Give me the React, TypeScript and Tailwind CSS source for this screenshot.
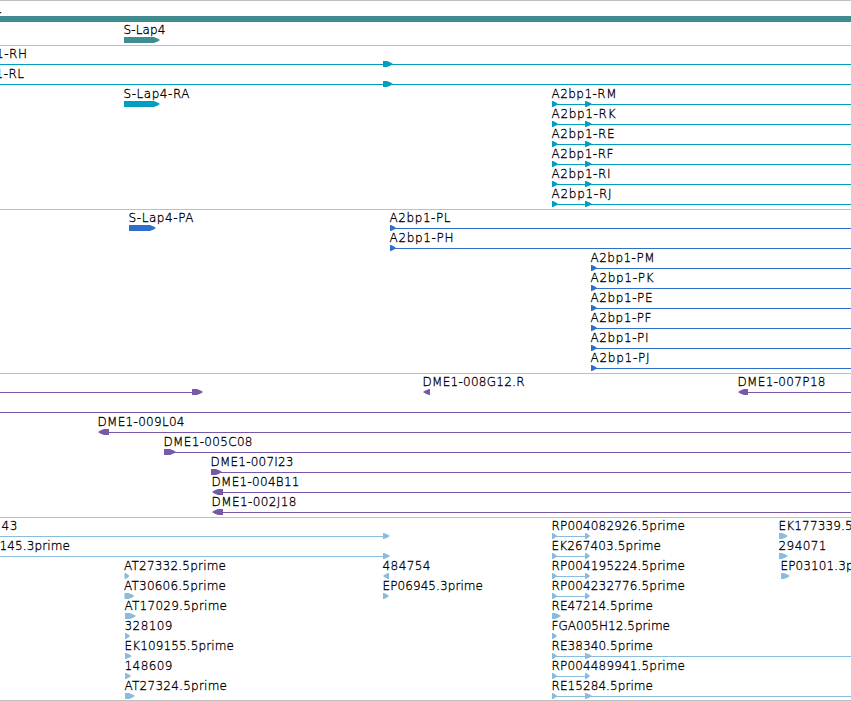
type Feature = {
  label?: string;
  x: number;
  width?: number;
  line?: [number, number];
  blocks?: [number, number][];
  reverse?: boolean;
};

type TrackData = {
  name: string;
  color: string;
  className: string;
  rows: Feature[][];
};

const END = 851;

const transcript = (label: string, width: number): Feature => ({
  label,
  x: 552,
  width,
  line: [552, END],
  blocks: [[552, 558], [585, 592]],
});

const protein = (label: string, x: number, width: number): Feature => ({
  label,
  x,
  width,
  line: [x, END],
  blocks: [[x, x + 6]],
});

const clone = (label: string, x: number, width: number, head: number, reverse = false): Feature => ({
  label,
  x,
  width,
  line: [x + 5, END],
  blocks: [[x, x + head]],
  reverse,
});

const est = (label: string, x: number, width: number, length: number, reverse = false): Feature => ({
  label,
  x,
  width,
  blocks: [[x, x + length]],
  reverse,
});

const spliced = (label: string, width: number, long = false): Feature => ({
  label,
  x: 552,
  width,
  line: [552, long ? END : 588],
  blocks: [[552, 557], [585, long ? 592 : 590]],
});

const tracks: TrackData[] = [
  {
    name: "genes",
    color: "#408c91",
    className: "h-[45px]",
    rows: [
      [{ label: "A2bp1", x: -36, width: 39, blocks: [[-10, 870]] }],
      [{ label: "S-Lap4", x: 124, width: 42, blocks: [[124, 160]] }],
    ],
  },
  {
    name: "transcripts",
    color: "#009fc0",
    className: "h-[164px]",
    rows: [
      [{ label: "A2bp1-RH", x: -37, width: 64.5, line: [0, END], blocks: [[383, 393]] }],
      [{ label: "A2bp1-RL", x: -37, width: 61.5, line: [0, END], blocks: [[383, 393]] }],
      [{ label: "S-Lap4-RA", x: 124, width: 66, blocks: [[124, 160]] }, transcript("A2bp1-RM", 65)],
      [transcript("A2bp1-RK", 64)],
      [transcript("A2bp1-RE", 63)],
      [transcript("A2bp1-RF", 62)],
      [transcript("A2bp1-RI", 59)],
      [transcript("A2bp1-RJ", 60)],
    ],
  },
  {
    name: "proteins",
    color: "#306ecc",
    className: "h-[164px]",
    rows: [
      [{ label: "S-Lap4-PA", x: 129, width: 65, blocks: [[129, 156]] }, protein("A2bp1-PL", 390, 61)],
      [protein("A2bp1-PH", 390, 64)],
      [protein("A2bp1-PM", 591, 64)],
      [protein("A2bp1-PK", 591, 63)],
      [protein("A2bp1-PE", 591, 62)],
      [protein("A2bp1-PF", 591, 61)],
      [protein("A2bp1-PI", 591, 58)],
      [protein("A2bp1-PJ", 591, 59)],
    ],
  },
  {
    name: "clones",
    color: "#7759a7",
    className: "h-[144px]",
    rows: [
      [
        { x: 0, line: [0, 196], blocks: [[192, 203]] },
        est("DME1-008G12.R", 423, 102, 7, true),
        clone("DME1-007P18", 738, 88, 10, true),
      ],
      [{ x: 0, line: [0, END] }],
      [clone("DME1-009L04", 98, 87, 11, true)],
      [clone("DME1-005C08", 164, 89, 12)],
      [clone("DME1-007I23", 211, 83, 11)],
      [clone("DME1-004B11", 212, 88, 11, true)],
      [clone("DME1-002J18", 212, 85, 11, true)],
    ],
  },
  {
    name: "ests",
    color: "#8abcde",
    className: "h-[183px]",
    rows: [
      [
        { label: "43", x: 2, width: 16, line: [0, 388], blocks: [[383, 390]] },
        spliced("RP004082926.5prime", 133.5),
        est("EK177339.5prime", 779, 110, 9),
      ],
      [
        { label: "145.3prime", x: 0, width: 70.5, line: [0, 388], blocks: [[383, 390]] },
        spliced("EK267403.5prime", 109.5),
        est("294071", 779, 48, 9),
      ],
      [
        est("AT27332.5prime", 124.5, 102, 5),
        est("484754", 383, 48, 6, true),
        spliced("RP004195224.5prime", 133.5),
        est("EP03101.3prime", 781, 101, 9),
      ],
      [est("AT30606.5prime", 124.5, 102, 10), est("EP06945.3prime", 383, 100.5, 6), spliced("RP004232776.5prime", 133.5)],
      [est("AT17029.5prime", 125, 102.5, 11), est("RE47214.5prime", 552, 101.5, 9)],
      [est("328109", 125, 48, 5), est("FGA005H12.5prime", 552, 118.5, 5)],
      [est("EK109155.5prime", 125, 109.5, 7), spliced("RE38340.5prime", 101.5, true)],
      [est("148609", 125, 48, 6), spliced("RP004489941.5prime", 133.5)],
      [est("AT27324.5prime", 125, 102.5, 10), spliced("RE15284.5prime", 101.5, true)],
    ],
  },
];

// Block with a rounded-off head at the end it reads towards.
const arrowPoints = ([start, end]: [number, number], reverse?: boolean) => {
  const head = Math.min(end - start - 1, 6);
  const tail = reverse ? end : start;
  const tip = reverse ? start : end;
  const dir = reverse ? -1 : 1;
  const neck = tip - dir * head;
  const shoulder = tip - dir * head * 0.4;
  return `${tail},16 ${neck},16 ${shoulder},17.4 ${tip},19 ${shoulder},20.6 ${neck},22 ${tail},22`;
};

const FeatureGlyph = ({ feature, color }: { feature: Feature; color: string }) => (
  <g fill={color}>
    {feature.line && <rect x={feature.line[0]} y={19} width={feature.line[1] - feature.line[0]} height={1} />}
    {feature.blocks?.map((block) => (
      <polygon key={block[0]} points={arrowPoints(block, feature.reverse)} />
    ))}
    {feature.label && (
      <text x={feature.x - 0.5} y={13} textLength={feature.width} fill="#000" stroke="#000" strokeWidth={0.3}>
        {feature.label}
      </text>
    )}
  </g>
);

const Track = ({ track }: { track: TrackData }) => (
  <section className={`flex flex-col border-t border-[#bfbfbf] ${track.className}`}>
    <div className="-mt-px">
      {track.rows.map((row, index) => (
        <div key={index} className={track.name === "genes" && index === 0 ? "h-[21px]" : "h-5"}>
          <svg width={END} height={24} className="block overflow-visible text-[12px]">
            {row.map((feature) => (
              <FeatureGlyph key={feature.x} feature={feature} color={track.color} />
            ))}
          </svg>
        </div>
      ))}
    </div>
  </section>
);

export default function App() {
  return (
    <main className="h-[701px] w-[851px] overflow-hidden bg-white font-['DejaVu_Sans_Light','DejaVu_Sans',sans-serif] font-extralight">
      {tracks.map((track) => (
        <Track key={track.name} track={track} />
      ))}
      <div className="h-px bg-[#bfbfbf]" />
    </main>
  );
}
